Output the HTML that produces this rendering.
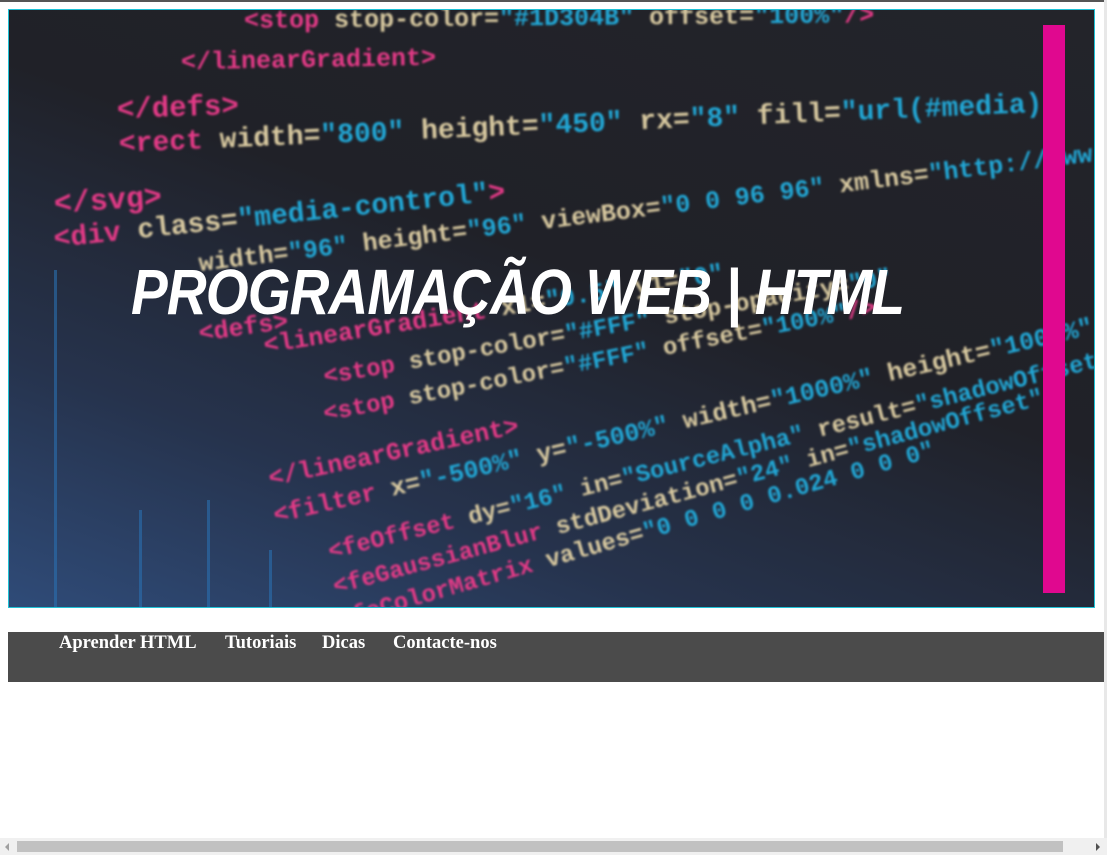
<!DOCTYPE html>
<html><head><meta charset="utf-8">
<style>
html,body{margin:0;padding:0;background:#fff;width:1107px;height:855px;overflow:hidden;position:relative}
.topline{position:absolute;left:0;top:0;width:1107px;height:2px;background:#555}
.hero{position:absolute;left:8px;top:9px;width:1085px;height:597px;border:1px solid #1fc2d6;overflow:hidden;
background:linear-gradient(200deg,#23242a 0%,#202128 45%,#26334d 75%,#2f4b78 100%)}
.code{position:absolute;left:0;top:0;font-family:"Liberation Mono",monospace;font-weight:bold;white-space:pre;filter:blur(1px)}
.code div{position:absolute}
.p{color:#e23a86}.w{color:#d8c9a0}.c{color:#22a6d4}
.bar{position:absolute;left:1034px;top:15px;width:22px;height:568px;background:#e0088f}
.title{position:absolute;left:122px;top:245px;font-family:"Liberation Sans",sans-serif;font-weight:bold;font-style:italic;font-size:64px;color:#fff;letter-spacing:-1px;white-space:nowrap;transform:scaleX(0.86);transform-origin:left}
.vl{position:absolute;width:3px;background:#2a6fb0;opacity:.6}
nav{position:absolute;left:8px;top:632px;width:1096px;height:50px;background:#4b4b4b}
nav a{position:absolute;top:1px;color:#fff;font-family:"Liberation Serif",serif;font-weight:bold;font-size:18.5px;text-decoration:none}
.sb{position:absolute;left:0;top:838px;width:1107px;height:17px;background:#f0f0f0}
.thumb{position:absolute;left:17px;top:3px;width:1046px;height:11px;background:#c1c1c1}
.vr{position:absolute;left:1104px;top:0;width:3px;height:838px;background:#e8e8e8}
</style></head><body>
<div class="topline"></div>
<div class="hero">
 <div class="vl" style="left:45px;top:260px;height:340px"></div>
 <div class="vl" style="left:130px;top:500px;height:100px"></div>
 <div class="vl" style="left:198px;top:490px;height:110px"></div>
 <div class="vl" style="left:260px;top:540px;height:60px"></div>
 <div class="code">
  <div style="left:235px;top:-6px;font-size:25px;transform:rotate(-0.5deg)"><span class="p">&lt;stop</span> <span class="w">stop-color=</span><span class="c">"#1D304B"</span> <span class="w">offset=</span><span class="c">"100%"</span><span class="p">/&gt;</span></div>
  <div style="left:172px;top:36px;font-size:25px;transform:rotate(-1deg)"><span class="p">&lt;/linearGradient&gt;</span></div>
  <div style="left:108px;top:82px;font-size:29px;transform:rotate(-2deg)"><span class="p">&lt;/defs&gt;</span></div>
  <div style="left:110px;top:120px;font-size:28px;transform:rotate(-2.5deg);transform-origin:left"><span class="p">&lt;rect</span> <span class="w">width=</span><span class="c">"800"</span> <span class="w">height=</span><span class="c">"450"</span> <span class="w">rx=</span><span class="c">"8"</span> <span class="w">fill=</span><span class="c">"url(#media)"</span></div>
  <div style="left:45px;top:175px;font-size:30px;transform:rotate(-4deg)"><span class="p">&lt;/svg&gt;</span></div>
  <div style="left:45px;top:215px;font-size:28px;transform:rotate(-6deg);transform-origin:left"><span class="p">&lt;div</span> <span class="w">class=</span><span class="c">"media-control"</span><span class="p">&gt;</span></div>
  <div style="left:190px;top:240px;font-size:25px;transform:rotate(-7deg);transform-origin:left"><span class="w">width=</span><span class="c">"96"</span> <span class="w">height=</span><span class="c">"96"</span> <span class="w">viewBox=</span><span class="c">"0 0 96 96"</span> <span class="w">xmlns=</span><span class="c">"http://www.w3.org"</span></div>
  <div style="left:190px;top:310px;font-size:25px;transform:rotate(-8deg);transform-origin:left"><span class="p">&lt;defs&gt;</span></div>
  <div style="left:255px;top:322px;font-size:25px;transform:rotate(-9deg);transform-origin:left"><span class="p">&lt;linearGradient</span> <span class="w">x1=</span><span class="c">"0.5"</span> <span class="w">y1=</span><span class="c">"0"</span></div>
  <div style="left:315px;top:355px;font-size:24px;transform:rotate(-10deg);transform-origin:left"><span class="p">&lt;stop</span> <span class="w">stop-color=</span><span class="c">"#FFF"</span> <span class="w">stop-opacity=</span><span class="c">"0"</span></div>
  <div style="left:315px;top:392px;font-size:24px;transform:rotate(-11deg);transform-origin:left"><span class="p">&lt;stop</span> <span class="w">stop-color=</span><span class="c">"#FFF"</span> <span class="w">offset=</span><span class="c">"100%"</span><span class="p">/&gt;</span></div>
  <div style="left:260px;top:455px;font-size:25px;transform:rotate(-12deg);transform-origin:left"><span class="p">&lt;/linearGradient&gt;</span></div>
  <div style="left:265px;top:492px;font-size:25px;transform:rotate(-13deg);transform-origin:left"><span class="p">&lt;filter</span> <span class="w">x=</span><span class="c">"-500%"</span> <span class="w">y=</span><span class="c">"-500%"</span> <span class="w">width=</span><span class="c">"1000%"</span> <span class="w">height=</span><span class="c">"1000%"</span></div>
  <div style="left:320px;top:530px;font-size:24px;transform:rotate(-14deg);transform-origin:left"><span class="p">&lt;feOffset</span> <span class="w">dy=</span><span class="c">"16"</span> <span class="w">in=</span><span class="c">"SourceAlpha"</span> <span class="w">result=</span><span class="c">"shadowOffset"</span></div>
  <div style="left:325px;top:565px;font-size:24px;transform:rotate(-15deg);transform-origin:left"><span class="p">&lt;feGaussianBlur</span> <span class="w">stdDeviation=</span><span class="c">"24"</span> <span class="w">in=</span><span class="c">"shadowOffset"</span></div>
  <div style="left:330px;top:598px;font-size:24px;transform:rotate(-16deg);transform-origin:left"><span class="p">&lt;feColorMatrix</span> <span class="w">values=</span><span class="c">"0 0 0 0 0.024 0 0 0"</span></div>
 </div>
 <div class="bar"></div>
 <div class="title">PROGRAMAÇÃO WEB | HTML</div>
</div>
<nav>
 <a style="left:51px">Aprender HTML</a>
 <a style="left:217px">Tutoriais</a>
 <a style="left:314px">Dicas</a>
 <a style="left:385px">Contacte-nos</a>
</nav>
<div class="vr"></div>
<div class="sb"><div class="thumb"></div>
<div style="position:absolute;left:5px;top:5px;width:0;height:0;border-top:4px solid transparent;border-bottom:4px solid transparent;border-right:4px solid #a0a0a0"></div>
<div style="position:absolute;left:1096px;top:5px;width:0;height:0;border-top:4px solid transparent;border-bottom:4px solid transparent;border-left:4px solid #505050"></div>
</div>
</body></html>
